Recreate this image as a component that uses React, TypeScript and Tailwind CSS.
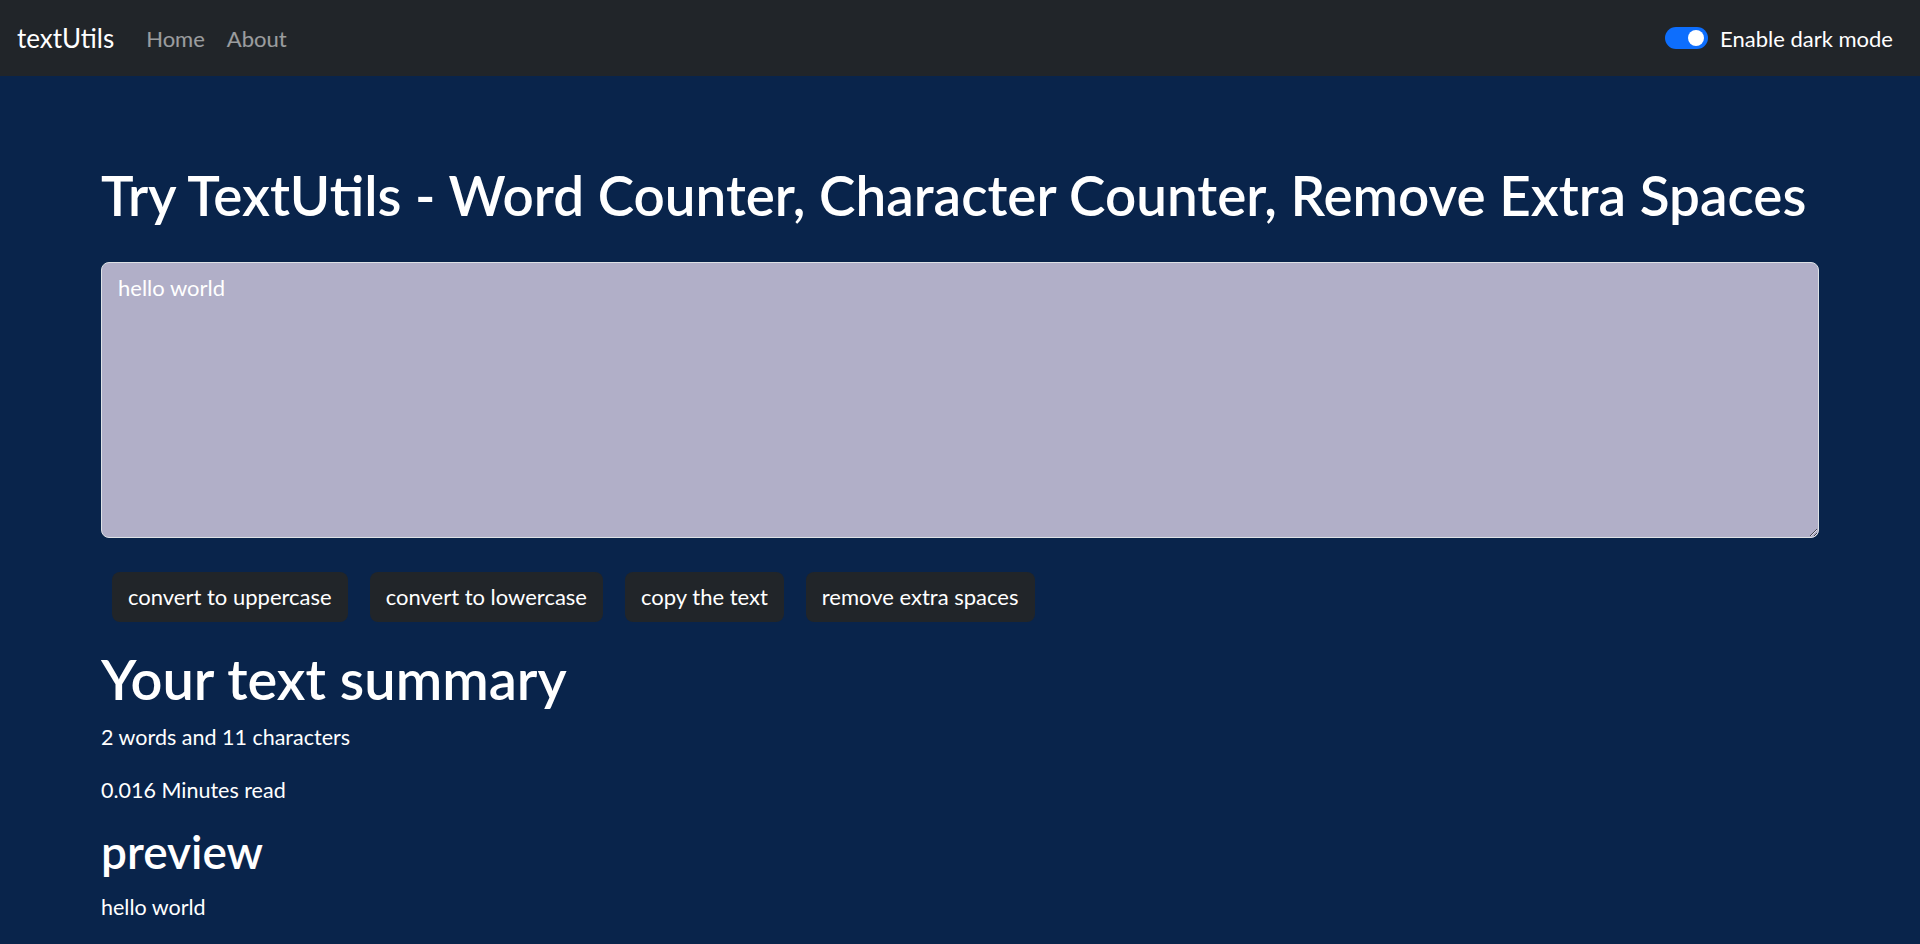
import { useState } from 'react';

const buttons = ['convert to uppercase', 'convert to lowercase', 'copy the text', 'remove extra spaces'];

export default function App() {
  const [text, setText] = useState('hello world');
  const words = text.split(/\s+/).filter((w) => w.length > 0).length;

  return (
    <div className="min-h-screen bg-[#09244b] text-white font-['Lato',sans-serif]">
      <nav className="h-[76px] bg-[#212529] flex items-center justify-between pl-[17px] pr-[27px]">
        <div className="flex items-center">
          <span className="text-[26px] text-white mr-[21px]">textUtils</span>
          <a className="text-[22px] text-white/55 px-[11px]">Home</a>
          <a className="text-[22px] text-white/55 px-[11px]">About</a>
        </div>
        <div className="flex items-center gap-[12px]">
          <span className="relative w-[43px] h-[22px] rounded-full bg-[#0d6efd]">
            <span className="absolute right-[4px] top-[3px] w-[16px] h-[16px] rounded-full bg-white" />
          </span>
          <span className="text-[22px] text-white">Enable dark mode</span>
        </div>
      </nav>

      <main className="px-[101px] pb-[24px]">
        <h1 className="mt-[87px] text-[54.8px] leading-[1.2] font-semibold whitespace-nowrap">
          Try TextUtils - Word Counter, Character Counter, Remove Extra Spaces
        </h1>
        <textarea
          value={text}
          onChange={(e) => setText(e.target.value)}
          className="mt-[33px] block w-full h-[276px] rounded-[8px] border border-[#dee2e6] bg-[#b1afc8] text-white text-[22px] px-[16px] py-[8px] outline-none"
        />
        <div className="mt-[34px] flex gap-[22px] pl-[11px]">
          {buttons.map((b) => (
            <button key={b} className="h-[50px] px-[16px] rounded-[8px] bg-[#212529] text-white text-[22px]">
              {b}
            </button>
          ))}
        </div>

        <h1 className="mt-[23px] text-[56px] leading-[1.2] font-semibold">Your text summary</h1>
        <p className="mt-[9px] text-[21.5px] leading-[1.5]">
          {words} words and {text.length} characters
        </p>
        <p className="mt-[21px] text-[21.5px] leading-[1.5]">{(0.008 * words).toFixed(3)} Minutes read</p>
        <h2 className="mt-[18px] text-[46px] leading-[1.2] font-semibold">preview</h2>
        <p className="mt-[11px] text-[21.5px] leading-[1.5]">{text}</p>
      </main>
    </div>
  );
}
